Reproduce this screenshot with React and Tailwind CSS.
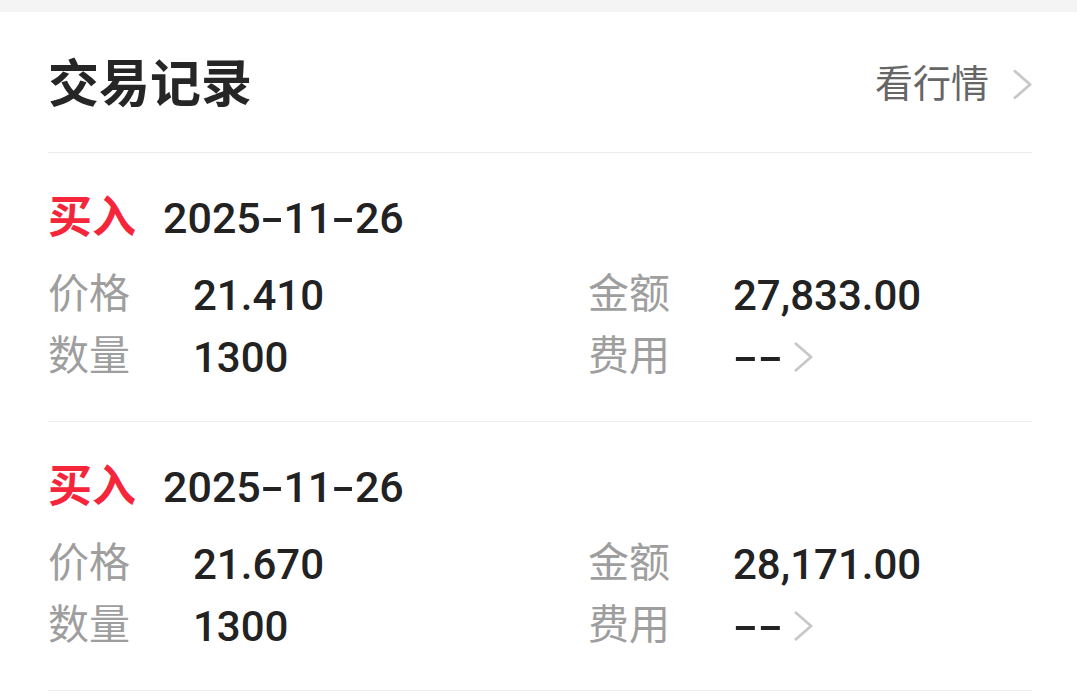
import React from 'react';

const records = [
    { side: '买入', date: '2025-11-26', price: '21.410', amount: '27,833.00', qty: '1300', fee: '--' },
    { side: '买入', date: '2025-11-26', price: '21.670', amount: '28,171.00', qty: '1300', fee: '--' },
];

const Chevron = ({ className }) => (
    <svg viewBox="0 0 20 32" className={className} fill="none" stroke="currentColor" strokeWidth="3" strokeLinecap="round" strokeLinejoin="round">
        <polyline points="2,2 18,16 2,30" />
    </svg>
);

// 连字符在原图里比较宽，单独拉伸一下
const renderDate = (text) =>
    text.split('-').map((part, i, arr) => (
        <React.Fragment key={i}>
            {part}
            {i < arr.length - 1 && <span className="inline-block mx-[4px] scale-x-[1.6]">-</span>}
        </React.Fragment>
    ));

const Field = ({ label, children }) => (
    <div className="flex items-center h-[62px]">
        <span className="w-[145px] text-[41px] text-[#9e9e9e]">{label}</span>
        <span className="flex items-center text-[42px] font-medium text-[#222]">{children}</span>
    </div>
);

const App = () => {
    return (
        <div className="w-[1077px] h-[698px] overflow-hidden bg-white" style={{ fontFamily: 'Roboto, "Noto Sans CJK SC", sans-serif' }}>
            <div className="h-[12px] bg-[#f4f4f4]"></div>

            <div className="pl-[48px] pr-[45px]">
                {/* --- 标题栏 --- */}
                <div className="h-[141px] flex items-center justify-between border-b border-[#ececec] pt-[4px]">
                    <h1 className="text-[51px] font-bold text-[#262626] leading-none">交易记录</h1>
                    <div className="flex items-center gap-[24px] text-[38px] text-[#666] leading-none">
                        <span>看行情</span>
                        <Chevron className="w-[19px] h-[31px] text-[#c8c8c8]" />
                    </div>
                </div>

                {/* --- 记录列表 --- */}
                {records.map((r, idx) => (
                    <div key={idx} className="border-b border-[#ececec] pt-[35px] pb-[33px]">
                        <div className="flex items-center h-[60px]">
                            <span className="w-[115px] text-[44px] font-bold text-[#f5263a]">{r.side}</span>
                            <span className="text-[43px] font-medium text-[#222]">{renderDate(r.date)}</span>
                        </div>
                        <div className="mt-[16px] flex">
                            <div className="w-[540px]">
                                <Field label="价格">{r.price}</Field>
                                <Field label="数量">{r.qty}</Field>
                            </div>
                            <div>
                                <Field label="金额">{r.amount}</Field>
                                <Field label="费用">
                                    <span className="inline-block origin-left scale-x-[1.75] mr-[20px]">{r.fee}</span>
                                    <Chevron className="ml-[12px] w-[19px] h-[32px] text-[#c8c8c8]" />
                                </Field>
                            </div>
                        </div>
                    </div>
                ))}
            </div>
        </div>
    );
};

export default App;
